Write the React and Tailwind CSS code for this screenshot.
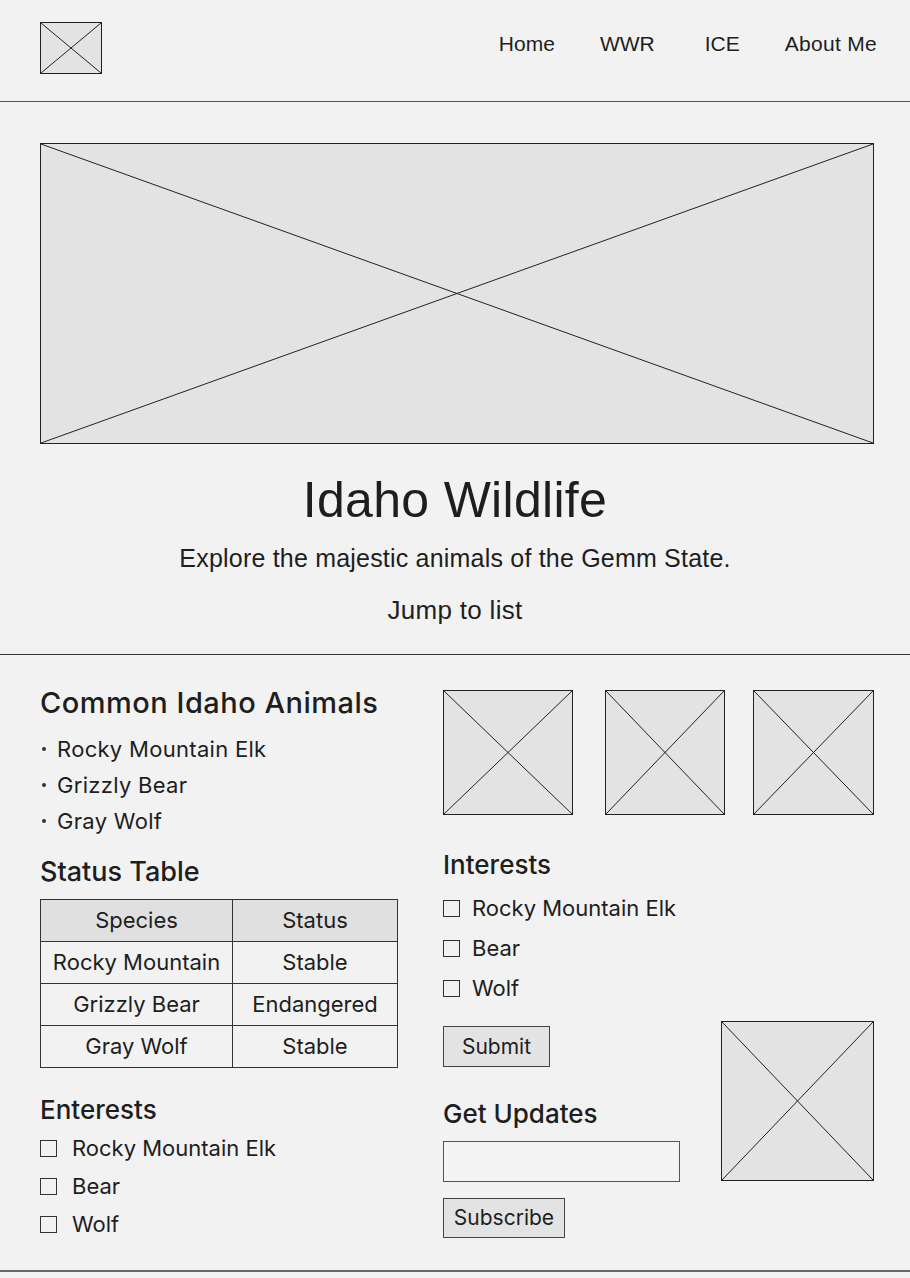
import React from "react";

function XBox({ className = "" }) {
  return (
    <div className={`border border-[#222] bg-[#e3e3e3] ${className}`}>
      <svg className="block h-full w-full" viewBox="0 0 100 100" preserveAspectRatio="none">
        <line x1="0" y1="0" x2="100" y2="100" stroke="#222" strokeWidth="1" vectorEffect="non-scaling-stroke" />
        <line x1="100" y1="0" x2="0" y2="100" stroke="#222" strokeWidth="1" vectorEffect="non-scaling-stroke" />
      </svg>
    </div>
  );
}

function Check({ label, gap = "mr-[15px]" }) {
  return (
    <div className="flex items-center">
      <span className={`${gap} block h-[17px] w-[17px] border border-[#333] bg-[#f2f2f2]`} />
      <span>{label}</span>
    </div>
  );
}

export default function App() {
  return (
    <div
      className="min-h-[1278px] w-[910px] bg-[#f2f2f2] text-[#1e1e1e]"
      style={{ fontFamily: "'Liberation Sans', Arial, sans-serif" }}
    >
      {/* Header */}
      <header className="flex h-[102px] items-start justify-between border-b border-[#555] px-10 pt-[22px]">
        <XBox className="h-[52px] w-[62px]" />
        <nav className="mr-[-7px] mt-[8px] flex gap-[45px] text-[21px] leading-[28px]">
          <span>Home</span>
          <span className="mr-[5px]">WWR</span>
          <span>ICE</span>
          <span className="tracking-[0.3px]">About Me</span>
        </nav>
      </header>

      {/* Hero */}
      <section className="flex flex-col items-center border-b border-[#333] pt-[41px] pb-[29px]">
        <XBox className="ml-10 h-[301px] w-[834px] self-start" />
        <h1 className="mt-[26px] text-[50px] leading-[60px] tracking-[0.3px]">Idaho Wildlife</h1>
        <p className="mt-[13px] text-[25px] leading-[30px] tracking-[0.2px]">Explore the majestic animals of the Gemm State.</p>
        <p className="mt-[22px] text-[26px] leading-[30px] tracking-[0.3px]">Jump to list</p>
      </section>

      {/* Main */}
      <main
        className="flex border-b-2 border-[#666] pl-10 pr-[37px] pt-[31px] pb-[32px]"
        style={{ fontFamily: "Inter, 'Liberation Sans', sans-serif" }}
      >
        {/* Left column */}
        <div className="w-[358px] shrink-0">
          <h2 className="text-[29px] font-medium leading-[34px] tracking-[0.5px]">Common Idaho Animals</h2>
          <ul className="mt-[11px] text-[22px] leading-[36px] tracking-[0.3px]">
            {["Rocky Mountain Elk", "Grizzly Bear", "Gray Wolf"].map((t) => (
              <li key={t} className="flex items-center">
                <span className="ml-[2px] mr-[11px] inline-block h-[4px] w-[4px] rounded-full bg-[#333]" />
                {t}
              </li>
            ))}
          </ul>
          <h2 className="mt-[16px] text-[27px] font-medium leading-[34px]">Status Table</h2>
          <table className="mt-[10px] w-[358px] border-collapse text-[22px]">
            <thead>
              <tr className="bg-[#e0e0e0]">
                <th className="h-[42px] w-[192px] border border-[#333] font-normal">Species</th>
                <th className="h-[42px] border border-[#333] font-normal">Status</th>
              </tr>
            </thead>
            <tbody className="text-center">
              <tr>
                <td className="h-[42px] border border-[#333]">Rocky Mountain</td>
                <td className="h-[42px] border border-[#333]">Stable</td>
              </tr>
              <tr>
                <td className="h-[42px] border border-[#333]">Grizzly Bear</td>
                <td className="h-[42px] border border-[#333]">Endangered</td>
              </tr>
              <tr>
                <td className="h-[42px] border border-[#333]">Gray Wolf</td>
                <td className="h-[42px] border border-[#333]">Stable</td>
              </tr>
            </tbody>
          </table>
          <h2 className="mt-[27px] text-[26px] font-medium leading-[30px]">Enterests</h2>
          <div className="mt-[9px] flex flex-col gap-[10px] text-[22px] leading-[28px]">
            <Check label="Rocky Mountain Elk" />
            <Check label="Bear" />
            <Check label="Wolf" />
          </div>
        </div>

        {/* Right column */}
        <div className="ml-[45px] flex-1">
          <div className="mt-[4px] flex items-start">
            <XBox className="h-[125px] w-[130px]" />
            <XBox className="ml-[32px] h-[125px] w-[120px]" />
            <XBox className="ml-[28px] h-[125px] w-[121px]" />
          </div>
          <div className="mt-[34px] flex justify-between">
            <div>
              <h2 className="text-[26px] font-medium leading-[32px]">Interests</h2>
              <div className="mt-[13px] flex flex-col gap-[12px] text-[22px] leading-[28px]">
                <Check label="Rocky Mountain Elk" gap="mr-[12px]" />
                <Check label="Bear" gap="mr-[12px]" />
                <Check label="Wolf" gap="mr-[12px]" />
              </div>
              <button className="mt-[24px] block h-[41px] w-[107px] border border-[#444] bg-[#e3e3e3] text-[21px]">Submit</button>
              <h2 className="mt-[31px] text-[26px] font-medium leading-[32px]">Get Updates</h2>
              <div className="mt-[11px] h-[41px] w-[237px] border border-[#555] bg-[#f4f4f4]" />
              <button className="mt-[16px] block h-[40px] w-[122px] border border-[#444] bg-[#e3e3e3] text-[21px]">Subscribe</button>
            </div>
            <XBox className="mt-[172px] h-[160px] w-[153px]" />
          </div>
        </div>
      </main>
    </div>
  );
}
